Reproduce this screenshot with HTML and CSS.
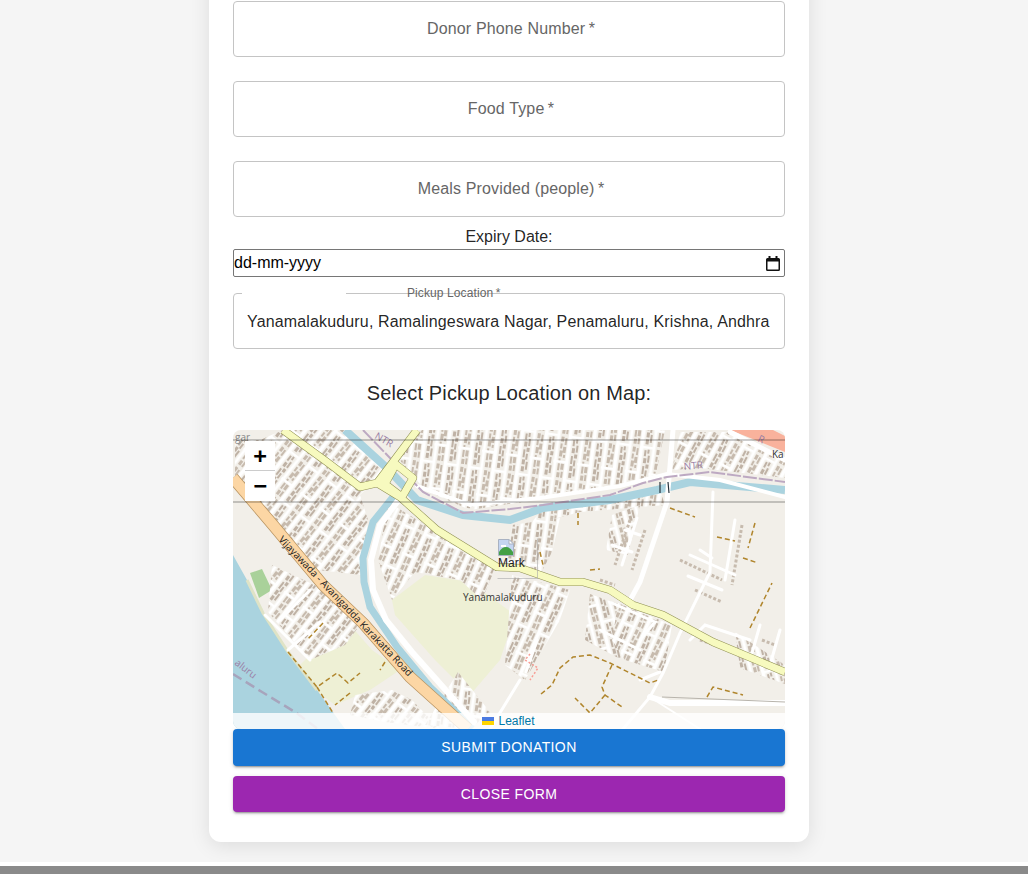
FILE: index.html
```html
<!DOCTYPE html>
<html lang="en">
<head>
    <meta charset="UTF-8">
    <meta name="viewport" content="width=device-width, initial-scale=1.0">
    <title>Donate Food</title>
    <link rel="stylesheet" href="styles.css">
</head>
<body>
    <main class="page">
        <form class="donation-card">
            <div class="field"><span class="field-label">Donor Phone Number&thinsp;*</span></div>
            <div class="field"><span class="field-label">Food Type&thinsp;*</span></div>
            <div class="field"><span class="field-label">Meals Provided (people)&thinsp;*</span></div>

            <div class="expiry-label">Expiry Date:</div>
            <div class="date-input">
                <span>dd-mm-yyyy</span>
                <svg class="calendar-icon" viewBox="0 0 14 15" width="14" height="15">
                    <path d="M2.500 0h2v2h5v-2h2v2h1a1.500 1.500 0 0 1 1.500 1.500v10a1.500 1.500 0 0 1-1.500 1.500h-11a1.500 1.500 0 0 1-1.500-1.500v-10a1.500 1.500 0 0 1 1.500-1.500h1zM1.500 5.500v8h11v-8z" fill="#111"/>
                </svg>
            </div>

            <div class="field field-filled">
                <span class="notch"></span>
                <span class="floating-label">Pickup Location&thinsp;*</span>
                <span class="field-value">Yanamalakuduru, Ramalingeswara Nagar, Penamaluru, Krishna, Andhra</span>
            </div>

            <h3 class="map-title">Select Pickup Location on Map:</h3>

            <div class="map">
                <svg class="map-tiles" viewBox="233 430 552 299" width="552" height="299">
                    <defs>
                        <pattern id="blocks" width="24" height="44" patternUnits="userSpaceOnUse">
                            <rect width="24" height="44" fill="#f2efe9"/>
                            <path d="M5 4h2v6h-2zM8 3h2v4h-2zM5 12h3v5h-3zM9 9h2v7h-2zM5 20h2v8h-2zM8 18h3v4h-3zM8 24h2v6h-2zM5 30h3v5h-3zM9 32h2v8h-2zM5 37h3v5h-3z" fill="#bfb2a5"/>
                            <path d="M17 2h3v5h-3zM21 3h2v7h-2zM17 9h2v5h-2zM20 12h3v6h-3zM17 16h3v6h-3zM21 20h2v3h-2zM17 24h2v2h-2zM20 29h3v6h-3zM17 29h2v7h-2zM17 38h3v5h-3zM21 37h2v6h-2z" fill="#c7bbae"/>
                            <rect x="0" width="3.500" height="44" fill="#fff"/>
                            <rect x="12.500" width="3" height="44" fill="#fff"/>
                            <rect y="0" width="13" height="2.500" fill="#fff"/>
                            <rect x="12" y="26" width="12" height="2.500" fill="#fff"/>
                        </pattern>
                        <pattern id="blocks-a" href="#blocks" patternTransform="rotate(38)"/>
                        <pattern id="blocks-b" href="#blocks" patternTransform="rotate(8)"/>
                        <pattern id="blocks-c" href="#blocks" patternTransform="rotate(28)"/>
                        <pattern id="blocks-d" href="#blocks" patternTransform="rotate(-14)"/>
                        <pattern id="blocks-e" href="#blocks" patternTransform="rotate(24) translate(4 6)"/>
                        <path id="orange-label" d="M278 540L415 684"/>
                        <path id="river-label" d="M234 664L256 681"/>
                    </defs>

                    <rect x="233" y="430" width="552" height="299" fill="#f2efe9"/>

                    <!-- land use -->
                    <path d="M392 600L425 575L470 582L515 615L500 660L470 695L435 660L395 615Z" fill="#eef0d5"/>
                    <path d="M300 665L325 640L350 625L372 650L400 670L370 690L335 705L315 690Z" fill="#eef0d5"/>
                    <path d="M250 573L262 569L272 590L259 598Z" fill="#a9d19a"/>
                    <path d="M314 640L335 608L342 616L322 644Z" fill="#a9d19a"/>
                    <path d="M730 430H773L785 436V452Z" fill="#f9b29c"/>

                    <!-- housing blocks -->
                    <path d="M283 430H345L388 470L360 495L368 520L362 575L318 570L235 480V440H260Z" fill="url(#blocks-a)"/>
                    <path d="M422 430H665L655 478L600 490L470 510L425 490L398 458Z" fill="url(#blocks-b)"/>
                    <path d="M680 432H728L785 462V478L700 468L672 470Z" fill="url(#blocks-c)"/>
                    <path d="M388 502L440 534L496 566L482 600L460 580L415 572L392 600L378 560Z" fill="url(#blocks-e)"/>
                    <path d="M512 575L570 590L560 620L525 680L505 665Z" fill="url(#blocks-e)"/>
                    <path d="M590 594L635 610L622 660L585 640Z" fill="url(#blocks-d)"/>
                    <path d="M618 603L672 625L664 672L625 660L612 640Z" fill="url(#blocks-e)"/>
                    <path d="M735 632L785 665V684L740 668Z" fill="url(#blocks-d)"/>
                    <path d="M272 565L325 590L360 625L345 645L310 660L268 612Z" fill="url(#blocks-a)"/>
                    <path d="M385 722L350 715L355 695L392 690L412 700L440 729Z" fill="url(#blocks-a)"/>
                    <path d="M425 725L458 672L490 712L470 729Z" fill="url(#blocks-b)"/>
                    <path d="M545 505L610 498L660 490L665 505L580 512L530 525Z" fill="url(#blocks-b)"/>
                    <path d="M612 515L640 505L628 555L606 550Z" fill="url(#blocks-d)"/>
                    <path d="M512 525L560 518L552 552L540 575L505 565Z" fill="url(#blocks-b)"/>

                    <!-- water -->
                    <path d="M233 555L247 580L263 613L288 652L317 690L345 729H233Z" fill="#aad3df"/>
                    <path d="M345 430L387 468L417 500L463 515L510 520L543 508L610 500L657 490L690 482L785 490" fill="none" stroke="#aad3df" stroke-width="8"/>
                    <path d="M393 497L373 522L363 558L364 582L370 607L397 647L430 687L457 713L472 729" fill="none" stroke="#aad3df" stroke-width="7"/>
                    <path d="M233 674L262 692L295 712L318 729" fill="none" stroke="#a7a4bc" stroke-width="2.500" stroke-dasharray="10 5"/>
                    <path d="M247 580L263 613L288 652L317 690" fill="none" stroke="#dfe3c6" stroke-width="3"/>

                    <!-- small buildings beside the side streets -->
                    <g fill="none" stroke="#c7bbae" stroke-width="3" stroke-dasharray="3 2">
                        <path d="M680 560L722 580M695 590L722 602M742 525L732 585"/>
                        <path d="M630 520L615 565M645 530L632 570"/>
                        <path d="M700 640L748 655M762 640L775 645"/>
                        <path d="M600 580L615 585"/>
                    </g>

                    <!-- streets -->
                    <g fill="none" stroke="#fff" stroke-linecap="round">
                        <path d="M400 498L380 525L371 560L373 590L386 620L412 652L474 722" stroke-width="6"/>
                        <path d="M417 486L470 505L540 498L620 486L667 474L720 480L785 497" stroke-width="4"/>
                        <path d="M673 430L667 502L640 582L628 604" stroke-width="5"/>
                        <path d="M713 492L710 572L680 633L663 673L650 697L623 729" stroke-width="3"/>
                        <path d="M650 697L670 703H785" stroke-width="6"/>
                        <path d="M650 697L700 729" stroke-width="2"/>
                        <path d="M690 555L735 575M688 576L722 590M700 550L712 558M735 520L725 580" stroke-width="3"/>
                        <path d="M637 518L622 565M612 545L632 552M625 530L640 535" stroke-width="3"/>
                        <path d="M690 640L705 625L750 640M760 625L750 660M780 630L770 665" stroke-width="3"/>
                        <path d="M600 630L640 650M612 603L655 622L640 640M640 680L660 672" stroke-width="3"/>
                        <path d="M490 729L520 680M526 672L537 640" stroke-width="3"/>
                        <path d="M288 650L320 622M265 615L310 660M280 620L310 590" stroke-width="3"/>
                        <path d="M730 432L785 460" stroke-width="5"/>
                    </g>
                    <path d="M662 697L785 702" fill="none" stroke="#b8b4ac" stroke-width="1"/>
                    <path d="M530 654L525 660L538 668L530 680" fill="none" stroke="#f79d94" stroke-width="1.500" stroke-dasharray="2 2"/>

                    <!-- tracks -->
                    <g fill="none" stroke="#b0852c" stroke-width="1.500" stroke-dasharray="5 3">
                        <path d="M541 694L552 685L560 668L573 657L590 655L610 663L650 683L658 680"/>
                        <path d="M612 665L602 687L605 695L622 707M605 695L590 713L575 698"/>
                        <path d="M707 697L713 687L743 695M750 628L772 583"/>
                        <path d="M288 652L317 687L337 673L348 683L360 673M317 687L333 713M350 693L335 705"/>
                        <path d="M323 623L307 640M385 662L380 670"/>
                        <path d="M670 508L695 517M717 537L735 541M755 523L748 548M743 558L758 563"/>
                        <path d="M578 513V525M540 552L543 565M590 570L600 569"/>
                    </g>

                    <!-- boundary -->
                    <path d="M363 430L390 458L423 492L463 513L510 509L543 505L610 495L643 483L667 477L710 472L785 482" fill="none" stroke="#bda9c2" stroke-width="2" stroke-dasharray="14 2"/>

                    <!-- main roads -->
                    <g fill="none" stroke-linejoin="round">
                        <path d="M233 478L273 525L323 585L363 623L410 677L450 713L468 729" stroke="#b99563" stroke-width="12"/>
                        <path d="M233 478L273 525L323 585L363 623L410 677L450 713L468 729" stroke="#fcd6a4" stroke-width="10.500"/>
                        <path d="M283 430L327 462L360 487L377 483L393 462L417 430M377 483L400 497L437 530L497 567L520 568L560 582L583 582L610 590L633 605L663 615L713 642L785 672M393 462L413 478L402 497L385 484L397 462" stroke="#8f8f52" stroke-width="8"/>
                        <path d="M283 430L327 462L360 487L377 483L393 462L417 430M377 483L400 497L437 530L497 567L520 568L560 582L583 582L610 590L633 605L663 615L713 642L785 672M393 462L413 478L402 497L385 484L397 462" stroke="#f7fabf" stroke-width="7"/>
                    </g>
                    <path d="M660 482V493M668 482L669 493" stroke="#26323a" stroke-width="1.200"/>

                    <!-- labels -->
                    <g class="map-text">
                        <text class="road-label"><textPath href="#orange-label">Vijayawada - Avanigadda Karakatta Road</textPath></text>
                        <text class="place-label" x="463" y="601">Yanamalakuduru</text>
                        <text class="boundary-label" x="684" y="470" transform="rotate(-5 684 470)">NTR</text>
                        <text class="boundary-label" x="374" y="438" transform="rotate(30 374 438)">NTR</text>
                        <text class="boundary-label"><textPath href="#river-label">aluru</textPath></text>
                        <text class="boundary-label" x="757" y="441" transform="rotate(25 757 441)">R</text>
                        <text class="place-label" x="772" y="458">Ka</text>
                        <text class="place-label faded" x="235" y="441">gar</text>
                    </g>
                </svg>

                <div class="marker">
                    <svg class="broken-image" viewBox="0 0 16 17" width="16" height="17">
                        <path d="M0.500 0.500H11L15.500 5V16.500H0.500Z" fill="#c4d5f2" stroke="#a9b2c2"/>
                        <path d="M11 0.500V5H15.500Z" fill="#fff" stroke="#a9b2c2"/>
                        <path d="M3 6h5v2h-5z" fill="#fff"/>
                        <path d="M1 16V13Q4 8 8 8T15 13V16Z" fill="#43a047"/>
                    </svg>
                    <span>Mark</span>
                </div>

                <div class="zoom-bar">
                    <div class="zoom-buttons">
                        <a class="zoom-btn">+</a>
                        <a class="zoom-btn">&minus;</a>
                    </div>
                </div>

                <div class="attribution">
                    <svg class="flag" viewBox="0 0 12 8" width="12" height="8">
                        <rect width="12" height="4" fill="#4c7be1"/>
                        <rect y="4" width="12" height="4" fill="#ffd500"/>
                    </svg>
                    <a>Leaflet</a>
                </div>
            </div>

            <button type="button" class="btn btn-submit">Submit Donation</button>
            <button type="button" class="btn btn-close">Close Form</button>
        </form>
    </main>

    <div class="footer-gap"></div>
    <div class="footer-bar"></div>
</body>
</html>
```

FILE: styles.css
```css
/* Donation form, scrolled down to the map */
html,
body {
    margin: 0;
    height: 874px;
    overflow: hidden;
}

body {
    display: flex;
    flex-direction: column;
    background-color: #f5f5f5;
    font-family: "Liberation Sans", Arial, sans-serif;
    color: rgba(0, 0, 0, 0.87);
}

.page {
    flex: 1;
    display: flex;
    justify-content: center;
    align-items: flex-end;
    min-height: 0;
    padding: 0 10px 20px 0;
}

.donation-card {
    box-sizing: border-box;
    width: 600px;
    flex-shrink: 0;
    padding: 40px 24px 30px;
    background-color: #fff;
    border-radius: 12px;
    box-shadow: 0 4px 20px rgba(0, 0, 0, 0.1);
}

.field {
    position: relative;
    box-sizing: border-box;
    height: 56px;
    margin-bottom: 24px;
    padding-left: 4px;
    display: flex;
    align-items: center;
    justify-content: center;
    border: 1px solid #c4c4c4;
    border-radius: 4px;
}

.field-label {
    font-size: 16px;
    letter-spacing: 0.15px;
    color: #666;
}

.expiry-label {
    margin-top: -13px;
    font-size: 16px;
    line-height: 18px;
    text-align: center;
    margin-bottom: 3px;
    color: rgba(0, 0, 0, 0.87);
}

.date-input {
    box-sizing: border-box;
    height: 28px;
    margin-bottom: 16px;
    padding: 0 3px 0 0;
    display: flex;
    align-items: center;
    justify-content: space-between;
    border: 1px solid #767676;
    border-radius: 2px;
    font-size: 16px;
    color: #000;
}

.calendar-icon {
    margin-right: 1px;
}

.field-filled {
    justify-content: flex-start;
    padding: 1px 14px 0 13px;
    margin-bottom: 0;
}

.field-value {
    white-space: nowrap;
    font-size: 16px;
    letter-spacing: 0.15px;
}

.notch {
    position: absolute;
    top: -1px;
    left: 8px;
    width: 104px;
    height: 1px;
    background-color: #fff;
}

.floating-label {
    position: absolute;
    top: -8px;
    left: 173px;
    font-size: 12px;
    line-height: 14px;
    letter-spacing: 0.1px;
    color: #666;
}

.map-title {
    margin: 33px 0 25px;
    font-size: 20px;
    line-height: 23px;
    font-weight: 400;
    letter-spacing: 0.15px;
    text-align: center;
}

.map {
    position: relative;
    height: 299px;
    overflow: hidden;
    border-radius: 8px;
}

.map-tiles {
    display: block;
}

.map-text text {
    font-family: "Open Sans", "DejaVu Sans", sans-serif;
}

.map-text .road-label {
    font-size: 10px;
    fill: #222;
}

.map-text .place-label {
    font-size: 10px;
    fill: #333;
}

.map-text .faded {
    fill: #888;
}

.map-text .boundary-label {
    font-size: 10px;
    fill: #9b7fa6;
}

.marker {
    position: absolute;
    left: 264px;
    top: 108px;
    box-sizing: border-box;
    width: 41px;
    height: 41px;
    border: 1px solid rgba(170, 170, 170, 0.6);
    border-left-color: transparent;
    border-top-color: transparent;
    font-size: 12px;
    line-height: 14px;
    color: #222;
}

.broken-image {
    display: block;
}

.zoom-bar {
    position: absolute;
    top: 9px;
    left: 0;
    right: 0;
    height: 60px;
    padding-left: 12px;
    border-top: 2px solid rgba(0, 0, 0, 0.2);
    border-bottom: 2px solid rgba(0, 0, 0, 0.2);
}

.zoom-buttons {
    width: 30px;
    background-color: #fff;
}

.zoom-btn {
    display: block;
    height: 30px;
    font-family: "Lucida Console", "DejaVu Sans Mono", monospace;
    font-size: 22px;
    font-weight: 700;
    line-height: 30px;
    text-align: center;
    color: #000;
}

.zoom-btn:first-child {
    border-bottom: 1px solid #ccc;
    height: 29px;
}

.attribution {
    position: absolute;
    left: 0;
    right: 0;
    bottom: 0;
    height: 16px;
    display: flex;
    align-items: center;
    justify-content: center;
    gap: 4px;
    padding-right: 1px;
    background-color: rgba(255, 255, 255, 0.8);
    font-size: 12px;
    color: #0078a8;
}

.btn {
    display: block;
    box-sizing: border-box;
    width: 100%;
    height: 36.5px;
    padding: 0;
    border: none;
    border-radius: 4px;
    font-family: "Liberation Sans", Arial, sans-serif;
    font-size: 14px;
    font-weight: 400;
    letter-spacing: 0.4px;
    text-transform: uppercase;
    color: #fff;
    box-shadow: 0 3px 1px -2px rgba(0, 0, 0, 0.2), 0 2px 2px rgba(0, 0, 0, 0.14), 0 1px 5px rgba(0, 0, 0, 0.12);
}

.btn-submit {
    background-color: #1976d2;
    margin-bottom: 10px;
}

.btn-close {
    background-color: #9c27b0;
}

.footer-gap {
    height: 4px;
    flex-shrink: 0;
    background-color: #fff;
}

.footer-bar {
    height: 8px;
    flex-shrink: 0;
    background-color: #8a8a8a;
}
```
